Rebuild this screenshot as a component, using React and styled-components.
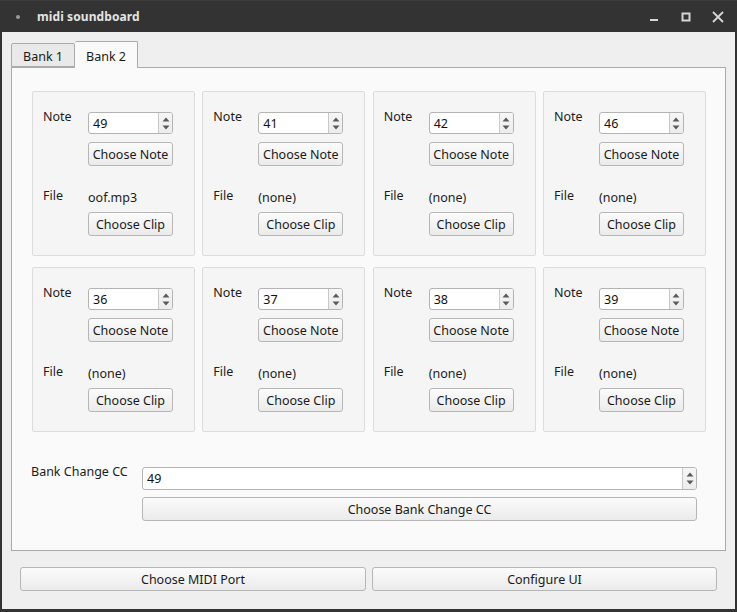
import React from "react";
import styled, { createGlobalStyle } from "styled-components";

const Global = createGlobalStyle`
  html, body { margin: 0; padding: 0; background: #2b2b2b; }
  body { font-family: "Noto Sans", "Open Sans", sans-serif; font-size: 12.5px; color: #1c1c1c; }
  * { box-sizing: border-box; }
`;

const Window = styled.div`
  width: 737px;
  height: 612px;
  background: #333333;
  display: flex;
  flex-direction: column;
  padding: 0 2px 3px 2px;
  border-top: 1px solid #3c3c3c;
`;

const TitleBar = styled.div`
  height: 31px;
  display: flex;
  align-items: center;
  color: #e4e4e4;
`;

const Dot = styled.span`
  width: 4px;
  height: 4px;
  border-radius: 50%;
  background: #9a9a9a;
  margin-left: 14px;
  margin-right: 17px;
`;

const Title = styled.span`
  font-weight: 700;
  font-size: 12px;
  letter-spacing: 0.1px;
`;

const WinControls = styled.div`
  margin-left: auto;
  display: flex;
  align-items: center;
  margin-right: 1px;
`;

const WinBtn = styled.span`
  width: 32px;
  height: 31px;
  display: flex;
  align-items: center;
  justify-content: center;
`;

const Client = styled.div`
  flex: 1;
  background: #efefef;
  display: flex;
  flex-direction: column;
  padding: 9px 9px 0 9px;
`;

const TabBar = styled.div`
  display: flex;
  align-items: flex-end;
  height: 26px;
  position: relative;
  z-index: 1;
`;

const Tab = styled.div`
  height: ${p => (p.$active ? 27 : 24)}px;
  padding-top: ${p => (p.$active ? 3 : 2)}px;
  margin-bottom: ${p => (p.$active ? -1 : 0)}px;
  display: flex;
  align-items: center;
  justify-content: center;
  white-space: nowrap;
  background: ${p => (p.$active ? "#fafafa" : "#e9e9e9")};
  border: 1px solid #ababab;
  border-bottom: ${p => (p.$active ? "none" : "1px solid #ababab")};
  border-left: ${p => (p.$active ? "none" : "1px solid #ababab")};
  border-radius: 2px 2px 0 0;
  width: ${p => p.$w}px;
  color: #1a1a1a;
`;

const Panel = styled.div`
  height: 484px;
  background: #fafafa;
  border: 1px solid #ababab;
  padding: 23px 19px 0 20px;
  display: flex;
  flex-direction: column;
`;

const CardGrid = styled.div`
  display: grid;
  grid-template-columns: repeat(4, 163px);
  column-gap: 7.33px;
  row-gap: 11px;
`;

const Card = styled.div`
  height: 165px;
  background: #f5f5f5;
  border: 1px solid #dcdcdc;
  border-radius: 2px;
  padding: 15px 0 0 10px;
  display: flex;
  flex-direction: column;
  gap: 20px;
`;

const FieldRow = styled.div`
  display: grid;
  grid-template-columns: 45px 85px;
`;

const Label = styled.div`
  line-height: 18px;
  padding-top: 1px;
  color: #1c1c1c;
  white-space: nowrap;
`;

const Controls = styled.div`
  display: flex;
  flex-direction: column;
  margin-top: ${p => p.$top}px;
  gap: ${p => p.$gap}px;
`;

const FileName = styled.div`
  line-height: 18px;
  padding-top: 1px;
  color: #1c1c1c;
`;

const SpinWrap = styled.div`
  height: ${p => p.$h || 22}px;
  width: 100%;
  display: flex;
  background: #ffffff;
  border: 1px solid #b4b4b4;
  border-radius: 3px;
  overflow: hidden;
`;

const SpinValue = styled.div`
  flex: 1;
  padding-left: 4px;
  display: flex;
  align-items: center;
  color: #111;
`;

const SpinArrows = styled.div`
  width: 14px;
  border-left: 1px solid #c8c8c8;
  background: linear-gradient(#f6f6f6, #ececec);
  display: flex;
  flex-direction: column;
  align-items: center;
  justify-content: center;
  gap: 3px;
`;

const Button = styled.div`
  height: 24px;
  width: 100%;
  border: 1px solid #b6b6b6;
  border-radius: 3px;
  background: linear-gradient(#fbfbfb, #ebebeb);
  display: flex;
  align-items: center;
  justify-content: center;
  color: #1a1a1a;
  white-space: nowrap;
`;

const BankRow = styled.div`
  display: grid;
  grid-template-columns: 111px 555px;
  margin-top: 30px;
  margin-left: -1px;
`;

const Bottom = styled.div`
  display: grid;
  grid-template-columns: 346px 345px;
  column-gap: 6px;
  padding: 16px 0 0 9px;
`;

function Arrows() {
  return (
    <SpinArrows>
      <svg width="8" height="5" viewBox="0 0 8 5">
        <path d="M0.5 4.5 L4 0.5 L7.5 4.5 Z" fill="#5a5a5a" />
      </svg>
      <svg width="8" height="5" viewBox="0 0 8 5">
        <path d="M0.5 0.5 L4 4.5 L7.5 0.5 Z" fill="#5a5a5a" />
      </svg>
    </SpinArrows>
  );
}

function SpinBox({ value, h }) {
  return (
    <SpinWrap $h={h}>
      <SpinValue>{value}</SpinValue>
      <Arrows />
    </SpinWrap>
  );
}

const pads = [
  { note: 49, file: "oof.mp3" },
  { note: 41, file: "(none)" },
  { note: 42, file: "(none)" },
  { note: 46, file: "(none)" },
  { note: 36, file: "(none)" },
  { note: 37, file: "(none)" },
  { note: 38, file: "(none)" },
  { note: 39, file: "(none)" },
];

export default function App() {
  return (
    <>
      <Global />
      <Window>
        <TitleBar>
          <Dot />
          <Title>midi soundboard</Title>
          <WinControls>
            <WinBtn>
              <svg width="10" height="10" viewBox="0 0 10 10">
                <rect x="1" y="7" width="8" height="2" fill="#d6d6d6" />
              </svg>
            </WinBtn>
            <WinBtn>
              <svg width="10" height="10" viewBox="0 0 10 10">
                <rect x="1.5" y="1.5" width="7" height="7" fill="none" stroke="#d6d6d6" strokeWidth="2" />
              </svg>
            </WinBtn>
            <WinBtn>
              <svg width="12" height="12" viewBox="0 0 12 12">
                <path d="M1 1 L11 11 M11 1 L1 11" stroke="#d6d6d6" strokeWidth="1.8" />
              </svg>
            </WinBtn>
          </WinControls>
        </TitleBar>
        <Client>
          <TabBar>
            <Tab $w={64}>Bank 1</Tab>
            <Tab $active $w={63}>Bank 2</Tab>
          </TabBar>
          <Panel>
            <CardGrid>
              {pads.map((p, i) => (
                <Card key={i}>
                  <FieldRow>
                    <Label>Note</Label>
                    <Controls $top={5} $gap={8}>
                      <SpinBox value={p.note} />
                      <Button>Choose Note</Button>
                    </Controls>
                  </FieldRow>
                  <FieldRow>
                    <Label>File</Label>
                    <Controls $top={2} $gap={5}>
                      <FileName>{p.file}</FileName>
                      <Button>Choose Clip</Button>
                    </Controls>
                  </FieldRow>
                </Card>
              ))}
            </CardGrid>
            <BankRow>
              <Label>Bank Change CC</Label>
              <Controls $top={5} $gap={7}>
                <SpinBox value={49} h={23} />
                <Button>Choose Bank Change CC</Button>
              </Controls>
            </BankRow>
          </Panel>
          <Bottom>
            <Button>Choose MIDI Port</Button>
            <Button>Configure UI</Button>
          </Bottom>
        </Client>
      </Window>
    </>
  );
}
